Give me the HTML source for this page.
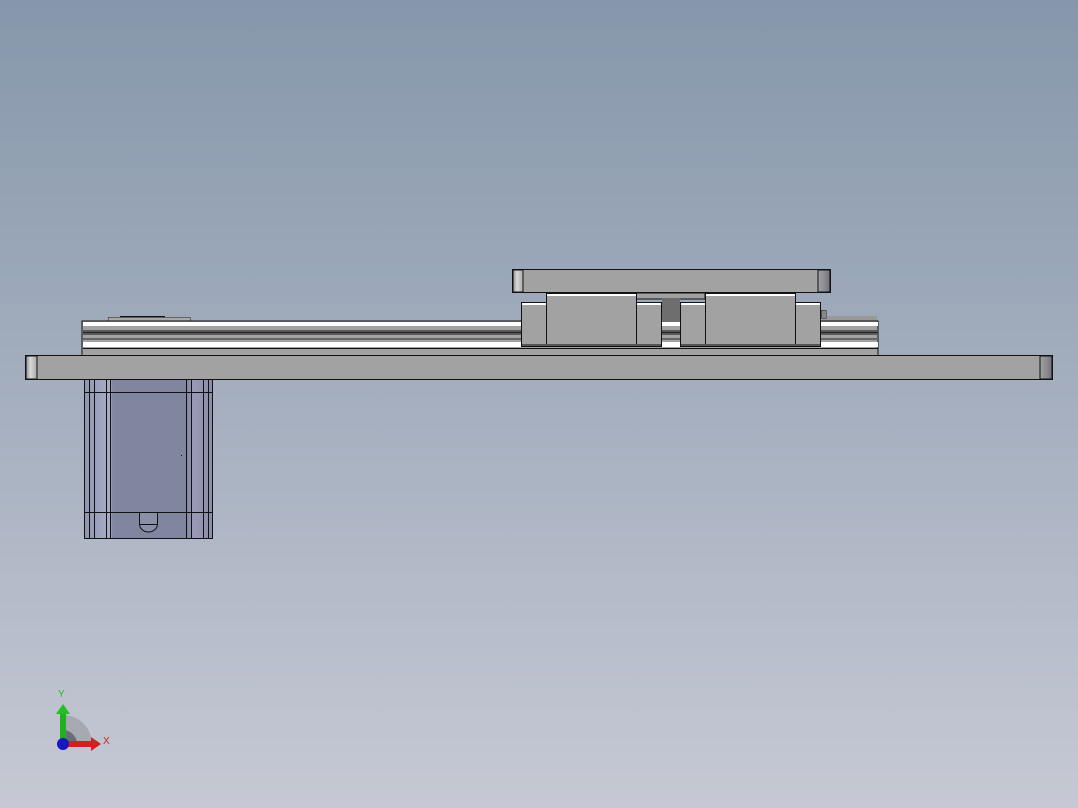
<!DOCTYPE html>
<html><head><meta charset="utf-8"><style>
html,body{margin:0;padding:0;width:1078px;height:808px;overflow:hidden}
body{background:linear-gradient(#8697ab,#a5afbf 50%,#c6c9d4)}
svg{position:absolute;left:0;top:0}
text{font-family:"Liberation Sans",sans-serif}
</style></head><body>
<svg width="1078" height="808" viewBox="0 0 1078 808" shape-rendering="crispEdges">
<defs>
<linearGradient id="capL" x1="0" x2="1"><stop offset="0" stop-color="#8e8e8e"/><stop offset=".4" stop-color="#d8d8d8"/><stop offset="1" stop-color="#a8a8a8"/></linearGradient>
<linearGradient id="capR" x1="0" x2="1"><stop offset="0" stop-color="#a0a0a0"/><stop offset=".6" stop-color="#8a8890"/><stop offset="1" stop-color="#706e78"/></linearGradient>
<linearGradient id="mot" x1="0" x2="1"><stop offset="0" stop-color="#9096b0"/><stop offset=".2" stop-color="#a8aec8"/><stop offset=".22" stop-color="#8086a0"/><stop offset=".8" stop-color="#8086a0"/><stop offset=".85" stop-color="#9a9ab8"/><stop offset="1" stop-color="#8a8ca8"/></linearGradient>
</defs>
<!-- small disc on rail left -->
<rect x="108" y="317" width="82" height="4" fill="#a8a8a8" stroke="#222" stroke-width="0.5"/>
<rect x="120" y="316" width="45" height="1.5" fill="#111"/>
<rect x="822" y="316" width="55" height="5" fill="#999"/>
<!-- rail -->
<rect x="82" y="321" width="796" height="35" fill="#a2a2a2" stroke="#111" stroke-width="1"/>
<rect x="83" y="322" width="795" height="4" fill="#fff"/>
<rect x="83" y="330" width="795" height="5" fill="#5a5a5a"/>
<rect x="83" y="332" width="795" height="1" fill="#222"/>
<rect x="83" y="338" width="795" height="2" fill="#666"/>
<rect x="83" y="342" width="795" height="5" fill="#fff"/>
<rect x="83" y="348" width="795" height="1" fill="#111"/>
<!-- base plate -->
<rect x="25.5" y="355.5" width="1027" height="24" fill="#a2a2a2" stroke="#111"/>
<rect x="26" y="356" width="11" height="23" fill="url(#capL)" stroke="#111" stroke-width="0.8"/>
<rect x="1040" y="356" width="12" height="23" fill="url(#capR)" stroke="#111" stroke-width="0.8"/>
<!-- motor -->
<rect x="84.5" y="379.5" width="128" height="159" fill="url(#mot)" stroke="#111"/>
<g stroke="#111" stroke-width="1">
<line x1="84" y1="392.5" x2="213" y2="392.5"/><line x1="84" y1="512.5" x2="213" y2="512.5"/>
<line x1="89.5" y1="380" x2="89.5" y2="538"/><line x1="94.5" y1="380" x2="94.5" y2="538"/>
<line x1="106.5" y1="380" x2="106.5" y2="538"/><line x1="110.5" y1="380" x2="110.5" y2="538"/>
<line x1="186.5" y1="380" x2="186.5" y2="538"/><line x1="191.5" y1="380" x2="191.5" y2="538"/>
<line x1="203.5" y1="380" x2="203.5" y2="538"/><line x1="208.5" y1="380" x2="208.5" y2="538"/>
</g>
<path d="M139.5 513 V524 A9 8 0 0 0 157.5 524 V513" fill="#8a90a8" stroke="#111" shape-rendering="auto"/>
<line x1="139" y1="524.5" x2="158" y2="524.5" stroke="#111"/>
<rect x="181" y="455" width="1" height="1" fill="#111"/>
<!-- carriage -->
<rect x="636" y="293" width="69" height="6" fill="#a0a0a0" stroke="#111"/>
<rect x="662" y="298" width="18" height="24" fill="#6e6e6e"/>
<rect x="521.5" y="302.5" width="140" height="44" fill="#a2a2a2" stroke="#111"/>
<rect x="522" y="303" width="139" height="2" fill="#fff"/>
<rect x="680.5" y="302.5" width="140" height="44" fill="#a2a2a2" stroke="#111"/>
<rect x="681" y="303" width="139" height="2" fill="#fff"/>
<rect x="546.5" y="293.5" width="90" height="53" fill="#a2a2a2" stroke="#111"/>
<rect x="547" y="294" width="89" height="2" fill="#fff"/>
<rect x="705.5" y="293.5" width="90" height="53" fill="#a2a2a2" stroke="#111"/>
<rect x="706" y="294" width="89" height="2" fill="#fff"/>
<rect x="522" y="344" width="139" height="2" fill="#555"/>
<rect x="681" y="344" width="139" height="2" fill="#555"/>
<rect x="821" y="310" width="5" height="8" fill="#888" stroke="#222" stroke-width="0.5"/>
<!-- top plate -->
<rect x="512.5" y="269.5" width="318" height="23" fill="#a2a2a2" stroke="#111"/>
<rect x="513" y="270" width="10" height="22" fill="url(#capL)" stroke="#111" stroke-width="0.8"/>
<rect x="818" y="270" width="12" height="22" fill="url(#capR)" stroke="#111" stroke-width="0.8"/>
<!-- triad -->
<g shape-rendering="auto">
<path d="M63 744 V715 A29 29 0 0 1 92 744 Z" fill="#a0a3ab" opacity=".8"/>
<path d="M63 744 V730 A14 14 0 0 1 77 744 Z" fill="#6a6d75"/>
<rect x="60" y="713" width="6" height="30" fill="#22b022"/>
<path d="M56 714 L63 704 L70 714 Z" fill="#22c022"/>
<rect x="64" y="741" width="28" height="6" fill="#d02020"/>
<path d="M91 737 L101 744 L91 751 Z" fill="#d02020"/>
<circle cx="63" cy="744" r="6" fill="#1818c0"/>
<text x="58" y="697" font-size="10" fill="#22c022">Y</text>
<text x="103" y="744" font-size="10" fill="#d02020">X</text>
</g>
</svg>
</body></html>
